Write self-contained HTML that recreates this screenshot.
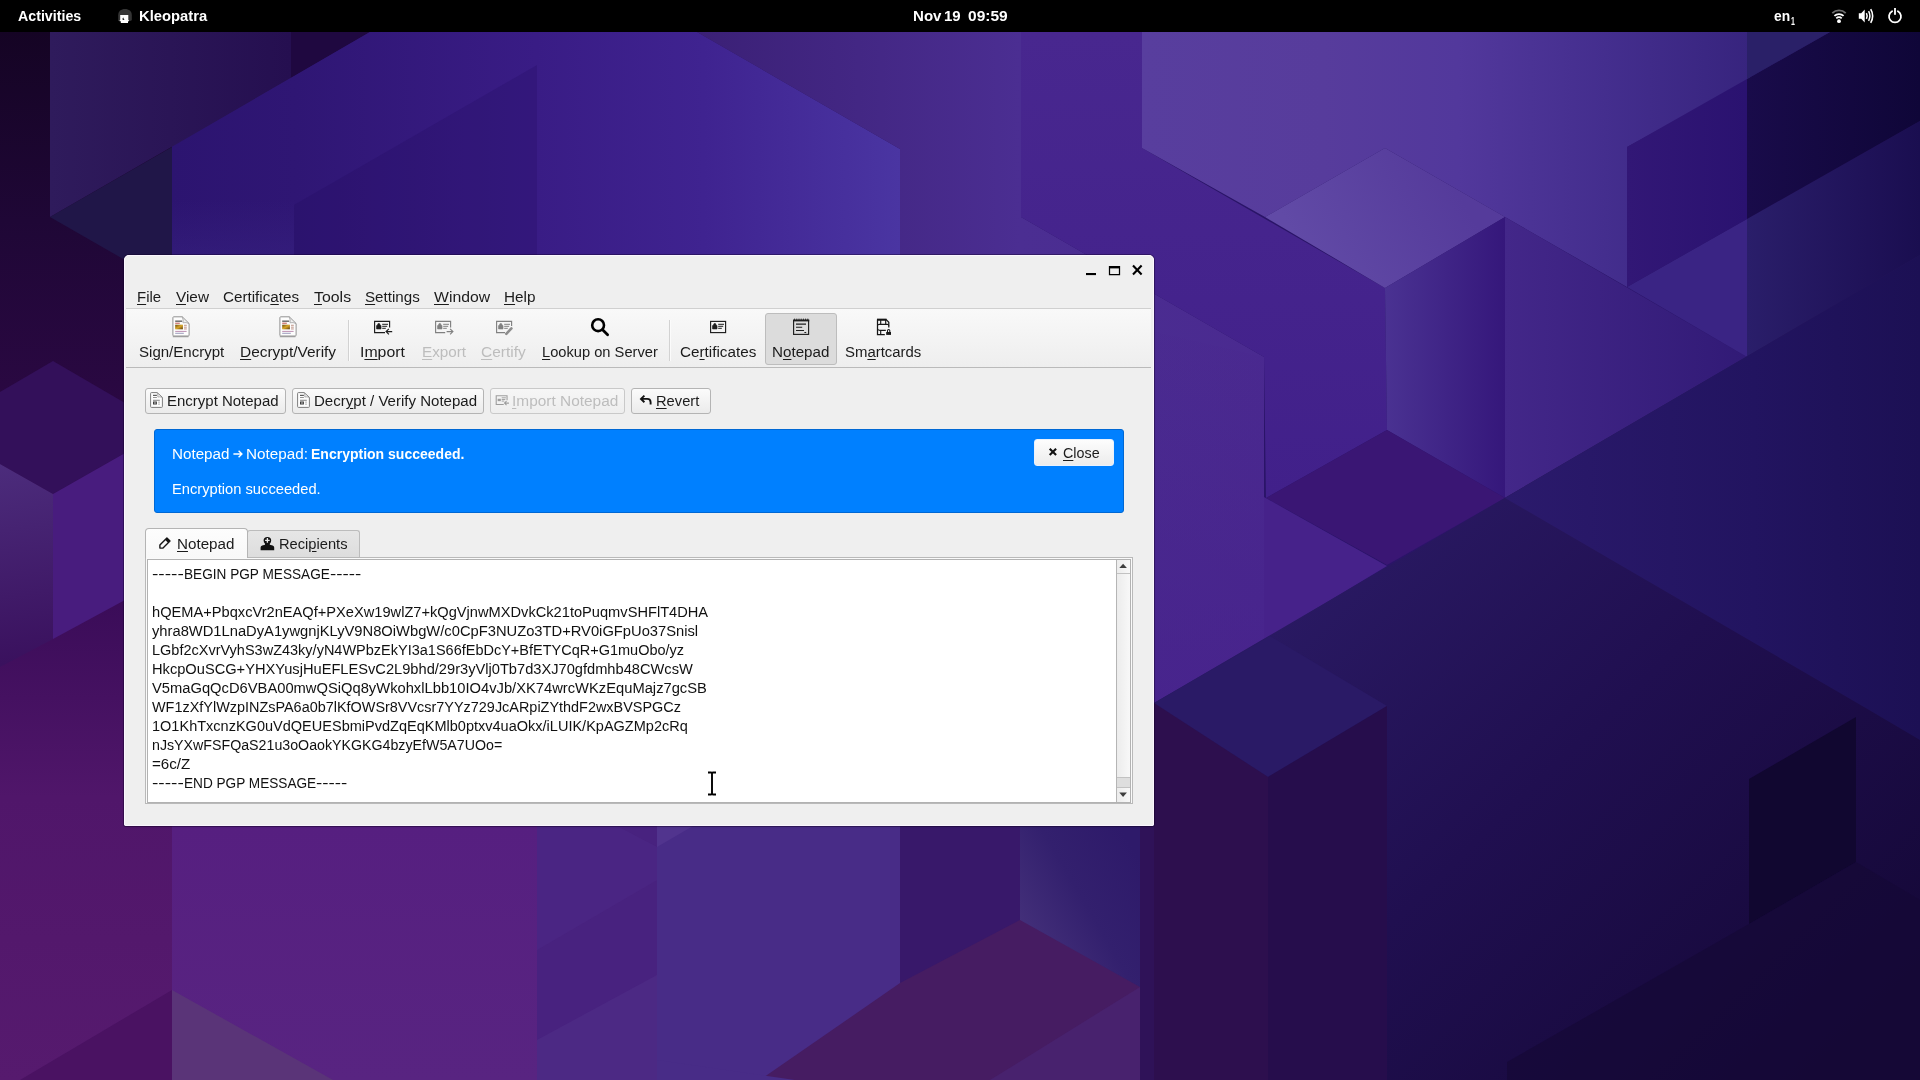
<!DOCTYPE html>
<html lang="en"><head><meta charset="utf-8"><title>Kleopatra</title>
<style>
html,body{margin:0;padding:0;}
html{overflow:hidden;background:#2a1666;}
body{width:1920px;height:1080px;overflow:hidden;position:relative;background:#2a1666;font-family:"Liberation Sans",sans-serif;font-size:14.67px;color:#1b1b1b;}
#wall{position:absolute;left:0;top:0;width:1920px;height:1080px;display:block;}
#topbar{position:absolute;left:0;top:0;width:1920px;height:32px;background:#000;}
.abs{position:absolute;}
#txt{position:absolute;left:0;top:0;width:1920px;height:1080px;will-change:transform;}
.t{position:absolute;white-space:pre;line-height:24px;height:24px;font-size:14.67px;transform-origin:0 50%;color:#1b1b1b;}
.t u{text-decoration:underline;text-decoration-thickness:1px;text-underline-offset:2px;}
.t.tb{color:#fff;font-weight:bold;}
.t.sub{font-size:10.5px;}
.t.dis{color:#bdbdbd;}
.t.wh{color:#fff;}
.t.b{font-weight:bold;}
.t.np{color:#111;}
#win{position:absolute;left:124px;top:255px;width:1030px;height:571px;background:#efefef;border-radius:5px 5px 2px 2px;box-shadow:0 0 0 1px rgba(16,0,36,.38),0 1px 2px rgba(0,0,0,.15);}
#win .hl{position:absolute;left:0;top:0;right:0;bottom:0;border:1px solid #fbf6ff;border-radius:5px 5px 2px 2px;pointer-events:none;}
#toolbar{position:absolute;left:126px;top:309px;width:1025px;height:58px;background:linear-gradient(#f9f9f9,#eeeeee);}
.hline{position:absolute;height:1px;}
.btn{position:absolute;box-sizing:border-box;border:1px solid #b4b4b4;border-radius:3px;background:linear-gradient(#fbfbfb,#ebebeb);}
.btn.dis{border-color:#c9c9c9;background:linear-gradient(#f6f6f6,#eeeeee);}

</style></head>
<body>
<svg id="wall" width="1920" height="1080" viewBox="0 0 1920 1080">
<defs>
<linearGradient id="gLeft" gradientUnits="userSpaceOnUse" x1="0" y1="32" x2="0" y2="1080">
 <stop offset="0" stop-color="#150424"/><stop offset=".18" stop-color="#1f0736"/><stop offset=".35" stop-color="#2a0842"/>
 <stop offset=".54" stop-color="#3a0c58"/><stop offset=".73" stop-color="#50166a"/><stop offset="1" stop-color="#561a6e"/></linearGradient>
<linearGradient id="gA" gradientUnits="userSpaceOnUse" x1="50" y1="0" x2="291" y2="0">
 <stop offset="0" stop-color="#2f1b5c"/><stop offset="1" stop-color="#250f50"/></linearGradient>
<linearGradient id="gB" gradientUnits="userSpaceOnUse" x1="172" y1="0" x2="900" y2="0">
 <stop offset="0" stop-color="#2c1470"/><stop offset=".17" stop-color="#2f1674"/><stop offset=".5" stop-color="#391c85"/>
 <stop offset=".73" stop-color="#3f2390"/><stop offset="1" stop-color="#4a35a2"/></linearGradient>
<linearGradient id="gE" gradientUnits="userSpaceOnUse" x1="697" y1="0" x2="1264" y2="0">
 <stop offset="0" stop-color="#3b2076"/><stop offset=".57" stop-color="#4b2e92"/><stop offset="1" stop-color="#4a2a90"/></linearGradient>
<linearGradient id="gEd" gradientUnits="userSpaceOnUse" x1="0" y1="300" x2="0" y2="720">
 <stop offset="0" stop-color="#46208a" stop-opacity="0"/><stop offset="1" stop-color="#46208a" stop-opacity=".7"/></linearGradient>
<linearGradient id="gF" gradientUnits="userSpaceOnUse" x1="0" y1="32" x2="0" y2="500">
 <stop offset="0" stop-color="#48278f"/><stop offset="1" stop-color="#41208a"/></linearGradient>
<linearGradient id="gG" gradientUnits="userSpaceOnUse" x1="1142" y1="0" x2="1750" y2="0">
 <stop offset="0" stop-color="#583e9e"/><stop offset=".3" stop-color="#573c9c"/><stop offset=".52" stop-color="#52389c"/>
 <stop offset=".76" stop-color="#442e8e"/><stop offset="1" stop-color="#37247e"/></linearGradient>
<linearGradient id="gH" gradientUnits="userSpaceOnUse" x1="1310" y1="262" x2="1450" y2="180">
 <stop offset="0" stop-color="#614aa6"/><stop offset="1" stop-color="#553b9b"/></linearGradient>
<linearGradient id="gI" gradientUnits="userSpaceOnUse" x1="1385" y1="0" x2="1505" y2="0">
 <stop offset="0" stop-color="#4a3292"/><stop offset="1" stop-color="#35177b"/></linearGradient>
<linearGradient id="gJ1" gradientUnits="userSpaceOnUse" x1="1505" y1="0" x2="1747" y2="0">
 <stop offset="0" stop-color="#432789"/><stop offset="1" stop-color="#311a76"/></linearGradient>
<linearGradient id="gJ3" gradientUnits="userSpaceOnUse" x1="1747" y1="0" x2="1920" y2="0">
 <stop offset="0" stop-color="#2a1e6a"/><stop offset=".7" stop-color="#1f1258"/><stop offset="1" stop-color="#1a0e50"/></linearGradient>
<linearGradient id="gK" gradientUnits="userSpaceOnUse" x1="1627" y1="0" x2="1747" y2="0">
 <stop offset="0" stop-color="#321776"/><stop offset="1" stop-color="#2a1270"/></linearGradient>
<linearGradient id="gK2" gradientUnits="userSpaceOnUse" x1="1747" y1="0" x2="1920" y2="0">
 <stop offset="0" stop-color="#190b4a"/><stop offset="1" stop-color="#0f0638"/></linearGradient>
<linearGradient id="gN" gradientUnits="userSpaceOnUse" x1="1300" y1="560" x2="1800" y2="1080">
 <stop offset="0" stop-color="#2a1a64"/><stop offset=".45" stop-color="#200f50"/><stop offset="1" stop-color="#150838"/></linearGradient>
<linearGradient id="gN1" gradientUnits="userSpaceOnUse" x1="1505" y1="0" x2="1920" y2="0">
 <stop offset="0" stop-color="#2b1a6c"/><stop offset=".6" stop-color="#221460"/><stop offset="1" stop-color="#1c1054"/></linearGradient>
<linearGradient id="gN4" gradientUnits="userSpaceOnUse" x1="1154" y1="0" x2="1387" y2="0">
 <stop offset="0" stop-color="#30114f"/><stop offset="1" stop-color="#230d4b"/></linearGradient>
<linearGradient id="gP1" gradientUnits="userSpaceOnUse" x1="0" y1="826" x2="0" y2="1080">
 <stop offset="0" stop-color="#561f80"/><stop offset="1" stop-color="#582481"/></linearGradient>
<linearGradient id="gP3" gradientUnits="userSpaceOnUse" x1="657" y1="0" x2="1020" y2="0">
 <stop offset="0" stop-color="#4b2d8d"/><stop offset=".6" stop-color="#482683"/><stop offset="1" stop-color="#421c74"/></linearGradient>
<linearGradient id="gP4" gradientUnits="userSpaceOnUse" x1="1020" y1="930" x2="1140" y2="860">
 <stop offset="0" stop-color="#44307a"/><stop offset=".5" stop-color="#33206e"/><stop offset="1" stop-color="#2e1a6a"/></linearGradient>
<linearGradient id="gCl" gradientUnits="userSpaceOnUse" x1="0" y1="464" x2="30" y2="660">
 <stop offset="0" stop-color="#4c2c7c"/><stop offset="1" stop-color="#3a115e"/></linearGradient>
<linearGradient id="gBl" gradientUnits="userSpaceOnUse" x1="0" y1="200" x2="0" y2="290">
 <stop offset="0" stop-color="#3c2888" stop-opacity="0"/><stop offset="1" stop-color="#3c2888" stop-opacity=".55"/></linearGradient>
</defs>
<rect width="1920" height="1080" fill="#2a1468"/>
<!-- left column -->
<rect x="0" y="0" width="172" height="1080" fill="url(#gLeft)"/>
<polygon points="50,32 291,32 291,78 50,217" fill="url(#gA)"/>
<polygon points="291,32 370,32 291,78" fill="#1f0840"/>
<polygon points="50,217 172,147 172,287" fill="#201648"/>
<!-- left cube -->
<polygon points="0,392 53,361 125,403 125,453 53,494 0,464" fill="#33105a"/>
<polygon points="0,464 53,494 53,639 0,667" fill="url(#gCl)"/>
<polygon points="53,494 125,453 125,600 53,639" fill="#481c7e"/>
<!-- B -->
<polygon points="172,147 370,32 697,32 900,149 900,830 172,830" fill="url(#gB)"/>
<polygon points="294,205 537,65 537,830 294,830" fill="#1e0a5c" opacity=".22"/>
<polygon points="172,200 294,200 294,300 172,300" fill="url(#gBl)"/>
<!-- E -->
<polygon points="697,32 1021,32 1021,217 1264,357 1264,640 1154,703 1154,830 900,830 900,149" fill="url(#gE)"/>
<polygon points="900,300 1021,300 1264,357 1264,640 1154,703 1154,830 900,830" fill="url(#gEd)"/>
<!-- band F -->
<polygon points="1021,32 1142,32 1142,148 1385,288 1387,430 1266,498 1264,357 1021,217" fill="url(#gF)"/>
<!-- G light -->
<polygon points="1142,32 1750,32 1750,80 1627,147 1627,287 1505,217 1385,148 1265,217 1142,148" fill="url(#gG)"/>
<polygon points="1265,217 1385,148 1505,217 1385,288" fill="url(#gH)"/>
<polygon points="1385,288 1505,217 1505,498 1387,430" fill="url(#gI)"/>
<!-- J -->
<polygon points="1505,217 1747,357 1505,498" fill="url(#gJ1)"/>
<polygon points="1627,287 1747,219 1747,357" fill="#3a2484"/>
<polygon points="1747,219 1920,121 1920,256 1747,357" fill="url(#gJ3)"/>
<!-- K band -->
<polygon points="1627,147 1747,79 1747,219 1627,287" fill="url(#gK)"/>
<polygon points="1747,79 1830,32 1920,32 1920,121 1747,219" fill="url(#gK2)"/>
<polygon points="1747,32 1830,32 1747,79" fill="#2a2068"/>
<!-- small dark diamond -->
<polygon points="1266,498 1387,430 1505,498 1387,565" fill="#3a1674"/>
<polygon points="1264,497 1387,566 1264,640" fill="#46228a"/>
<!-- N big dark -->
<polygon points="1154,703 1920,255 1920,1080 1154,1080" fill="url(#gN)"/>
<polygon points="1505,498 1920,255 1920,740 1864,707" fill="url(#gN1)"/>
<polygon points="1154,703 1270,636 1387,706 1268,777" fill="#2a1a66"/>
<polygon points="1154,703 1268,777 1268,1080 1154,1080" fill="#2d0f4e"/>
<polygon points="1268,777 1387,706 1387,1080 1268,1080" fill="#260d4c"/>
<polygon points="1749,779 1856,717 1856,862 1749,924" fill="#110730"/>
<polygon points="1507,1062 1749,924 1856,862 1920,900 1920,1080 1507,1080" fill="#150836" opacity=".7"/>
<!-- bottom under window -->
<rect x="172" y="826" width="365" height="254" fill="url(#gP1)"/>
<rect x="537" y="826" width="120" height="254" fill="#48227f"/>
<polygon points="537,826 617,826 657,847 657,880 537,950" fill="#4c2885" opacity=".6"/>
<polygon points="537,1040 657,975 657,1080 537,1080" fill="#4f2c86" opacity=".7"/>
<rect x="657" y="826" width="243" height="254" fill="#482c87"/>
<polygon points="657,847 693,826 657,826" fill="#51348e"/>
<rect x="900" y="826" width="120" height="254" fill="#38186a"/>
<rect x="1020" y="826" width="120" height="254" fill="url(#gP4)"/>
<polygon points="760,1080 900,983 1020,920 1140,987 1140,1080" fill="#461c62"/>
<polygon points="1140,987 1140,1080 990,1080" fill="#48226e"/>
<polygon points="657,1080 657,1060 795,1080" fill="#482c87"/>
<rect x="1140" y="826" width="14" height="254" fill="#2f1258"/>
<polygon points="172,990 20,1080 172,1080" fill="#4a1262"/>
<polygon points="172,990 333,1080 172,1080" fill="#5a3478"/>
</svg>
<div id="topbar"></div>
<!-- top bar icons -->
<svg class="abs" style="left:117px;top:8px" width="16" height="16" viewBox="0 0 16 16">
 <path d="M1.2 13 V7.2 C1.2 3.2 4 1 8 1 C12 1 14.8 3.2 14.8 7.2 V11.6 C14.8 12.6 14 13 13 13 Z" fill="#353535"/>
 <path d="M3.2 7 H11.3 V12.2 H12 V13.3 H11 V15 H3.8 V13.3 H2.6 V12.2 H3.2 Z" fill="#fff"/>
 <path d="M6.7 8.1 v1.4 c-1 .2 -1.5 1.2 -.9 2.4 h1.9 c-.9 -.3 -1.3 -1 -1 -1.6z" fill="#111"/>
</svg>
<svg class="abs" style="left:1831px;top:8px" width="16" height="16" viewBox="0 0 16 16">
 <path d="M1.3 5.1 A9.6 9.6 0 0 1 14.7 5.1" fill="none" stroke="#6f6f6f" stroke-width="1.9"/>
 <path d="M3.4 7.9 A6.6 6.6 0 0 1 12.6 7.9" fill="none" stroke="#fff" stroke-width="1.8"/>
 <path d="M5.3 10.3 A3.9 3.9 0 0 1 10.7 10.3" fill="none" stroke="#fff" stroke-width="1.7"/>
 <circle cx="8" cy="13.2" r="1.9" fill="#fff"/>
</svg>
<svg class="abs" style="left:1858px;top:8px" width="17" height="16" viewBox="0 0 17 16">
 <path d="M.8 5.2 H3.2 L6.7 1.6 V14.4 L3.2 10.8 H.8 Z" fill="#fff"/>
 <path d="M8.4 5.2 Q9.9 8 8.4 10.8" fill="none" stroke="#fff" stroke-width="1.5"/>
 <path d="M10.6 3.2 Q13.2 8 10.6 12.8" fill="none" stroke="#fff" stroke-width="1.5"/>
 <path d="M12.7 1.2 Q16.6 8 12.7 14.8" fill="none" stroke="#fff" stroke-width="1.6"/>
</svg>
<svg class="abs" style="left:1887px;top:7px" width="16" height="17" viewBox="0 0 16 17">
 <path d="M5.1 4.2 A6 6 0 1 0 10.9 4.2" fill="none" stroke="#fff" stroke-width="1.8" stroke-linecap="round"/>
 <rect x="7.1" y="1" width="1.8" height="6.8" fill="#fff"/>
</svg>

<div id="win"><div class="hl"></div></div>
<!-- window buttons -->
<svg class="abs" style="left:1082px;top:262px" width="64" height="16" viewBox="0 0 64 16">
 <rect x="4" y="11" width="10" height="2.1" fill="#000"/>
 <path d="M27.5 4.5 h10 v8 h-10 z M27.5 5.5 h10" fill="none" stroke="#000" stroke-width="1.25"/>
 <rect x="27" y="4" width="11" height="2.2" fill="#000"/>
 <path d="M51 3.6 l8.6 8.8 M59.6 3.6 l-8.6 8.8" stroke="#000" stroke-width="2.1" fill="none"/>
</svg>
<div class="hline" style="left:126px;top:308px;width:1025px;background:#d0d0d0"></div>
<div id="toolbar"></div>
<div class="hline" style="left:126px;top:367px;width:1025px;background:#bababa"></div>
<div class="abs" style="left:348px;top:320px;width:1px;height:41px;background:#d2d2d2"></div>
<div class="abs" style="left:349px;top:320px;width:1px;height:41px;background:#fbfbfb"></div>
<div class="abs" style="left:669px;top:320px;width:1px;height:41px;background:#d2d2d2"></div>
<div class="abs" style="left:670px;top:320px;width:1px;height:41px;background:#fbfbfb"></div>
<div class="abs" style="left:765px;top:313px;width:72px;height:52px;box-sizing:border-box;border:1px solid #bdbdbd;border-radius:3px;background:#dcdcdc"></div>

<!-- toolbar icons -->
<svg class="abs" style="left:171px;top:315px" width="20" height="23" viewBox="0 0 20 23">
 <defs><linearGradient id="img" x1="0" y1="0" x2="1" y2="1"><stop offset="0" stop-color="#6a4a0e"/><stop offset=".5" stop-color="#d8a628"/><stop offset="1" stop-color="#5a3c0c"/></linearGradient></defs>
 <path d="M1.8 21.6 h15.6" stroke="#8d8d8d" stroke-width="1.4" opacity=".7"/>
 <path d="M2.7 1.8 H11.2 L18.1 8.6 V20.2 Q18.1 21 17.3 21 H2.7 Q1.9 21 1.9 20.2 V2.6 Q1.9 1.8 2.7 1.8 Z" fill="#fdfdfd" stroke="#929292" stroke-width="1"/>
 <path d="M11.2 1.8 Q12.8 5.4 12 7.8 Q15 7 18.1 8.6 Z" fill="#efefef" stroke="#a2a2a2" stroke-width=".8"/>
 <rect x="4.2" y="5.6" width="7" height="1.1" fill="#3a3a3a"/>
 <rect x="4.2" y="7.7" width="4.6" height="1" fill="#c0504a"/>
 <rect x="4.2" y="9.7" width="7.7" height="4.6" fill="url(#img)"/>
 <rect x="13" y="9.8" width="2.8" height=".9" fill="#b98b7d"/><rect x="13" y="11.7" width="2.8" height=".9" fill="#b98b7d"/><rect x="13" y="13.5" width="2.8" height=".9" fill="#b98b7d"/>
 <rect x="4.2" y="15.9" width="11.4" height=".9" fill="#b583a8"/>
 <rect x="4.2" y="17.8" width="8.6" height=".9" fill="#8f8fb4"/>
</svg>
<svg class="abs" style="left:278px;top:315px" width="20" height="23" viewBox="0 0 20 23">
 <path d="M1.8 21.6 h15.6" stroke="#8d8d8d" stroke-width="1.4" opacity=".7"/>
 <path d="M2.7 1.8 H11.2 L18.1 8.6 V20.2 Q18.1 21 17.3 21 H2.7 Q1.9 21 1.9 20.2 V2.6 Q1.9 1.8 2.7 1.8 Z" fill="#fdfdfd" stroke="#929292" stroke-width="1"/>
 <path d="M11.2 1.8 Q12.8 5.4 12 7.8 Q15 7 18.1 8.6 Z" fill="#efefef" stroke="#a2a2a2" stroke-width=".8"/>
 <rect x="4.2" y="5.6" width="7" height="1.1" fill="#3a3a3a"/>
 <rect x="4.2" y="7.7" width="4.6" height="1" fill="#c0504a"/>
 <rect x="4.2" y="9.7" width="7.7" height="4.6" fill="url(#img)"/>
 <rect x="13" y="9.8" width="2.8" height=".9" fill="#b98b7d"/><rect x="13" y="11.7" width="2.8" height=".9" fill="#b98b7d"/><rect x="13" y="13.5" width="2.8" height=".9" fill="#b98b7d"/>
 <rect x="4.2" y="15.9" width="11.4" height=".9" fill="#b583a8"/>
 <rect x="4.2" y="17.8" width="8.6" height=".9" fill="#8f8fb4"/>
</svg>
<!-- import -->
<svg class="abs" style="left:373px;top:319px" width="22" height="18" viewBox="0 0 22 18">
 <path d="M12 13.6 H1.6 V2.4 H16.6 V8.6" fill="none" stroke="#1d1d1d" stroke-width="1.15"/>
 <path d="M3.6 6.6 h4.4 v3.3 h-4.4 z M4.6 6.6 v-.9 a1.2 1.2 0 0 1 2.4 0 v.9" fill="#1d1d1d" stroke="#1d1d1d" stroke-width=".7"/>
 <path d="M9.2 5.3 h5.8 M9.2 7.3 h5 M9.2 9.3 h3.6" stroke="#1d1d1d" stroke-width="1"/>
 <path d="M19.2 12.6 H13.4 M15.9 9.9 L13.1 12.6 L15.9 15.4" fill="none" stroke="#1d1d1d" stroke-width="1.15"/>
</svg>
<!-- export (disabled) -->
<svg class="abs" style="left:434px;top:319px" width="22" height="18" viewBox="0 0 22 18" opacity=".68">
 <path d="M11.2 13.6 H1.6 V2.4 H16.6 V8.6" fill="none" stroke="#4a4a4a" stroke-width="1.15"/>
 <path d="M3.6 6.6 h4.4 v3.3 h-4.4 z M4.6 6.6 v-.9 a1.2 1.2 0 0 1 2.4 0 v.9" fill="#4a4a4a" stroke="#4a4a4a" stroke-width=".7"/>
 <path d="M9.2 5.3 h5.8 M9.2 7.3 h5 M9.2 9.3 h3.6" stroke="#4a4a4a" stroke-width="1"/>
 <path d="M12.6 12.6 H18.6 M16.1 9.9 L18.9 12.6 L16.1 15.4" fill="none" stroke="#4a4a4a" stroke-width="1.15"/>
</svg>
<!-- certify (disabled) -->
<svg class="abs" style="left:495px;top:319px" width="22" height="18" viewBox="0 0 22 18" opacity=".68">
 <path d="M10 13.6 H1.6 V2.4 H16.6 V7" fill="none" stroke="#4a4a4a" stroke-width="1.15"/>
 <path d="M3.6 6.6 h4.4 v3.3 h-4.4 z M4.6 6.6 v-.9 a1.2 1.2 0 0 1 2.4 0 v.9" fill="#4a4a4a" stroke="#4a4a4a" stroke-width=".7"/>
 <path d="M9.2 5.3 h5.8 M9.2 7.3 h5 M9.2 9.3 h3.6" stroke="#4a4a4a" stroke-width="1"/>
 <path d="M11.3 14.8 L16.4 9.4" stroke="#5c5c5c" stroke-width="2.6" stroke-linecap="round"/>
</svg>
<!-- search -->
<svg class="abs" style="left:589px;top:316px" width="22" height="22" viewBox="0 0 22 22">
 <circle cx="9.1" cy="9.2" r="5.9" fill="none" stroke="#000" stroke-width="2.6"/>
 <path d="M13.6 13.8 L18.6 18.7" stroke="#000" stroke-width="2.8" stroke-linecap="round"/>
</svg>
<!-- certificates -->
<svg class="abs" style="left:709px;top:319px" width="20" height="16" viewBox="0 0 20 16">
 <rect x="1.6" y="2.4" width="15" height="11.2" fill="none" stroke="#1d1d1d" stroke-width="1.15"/>
 <path d="M3.6 6.6 h4.4 v3.3 h-4.4 z M4.6 6.6 v-.9 a1.2 1.2 0 0 1 2.4 0 v.9" fill="#1d1d1d" stroke="#1d1d1d" stroke-width=".7"/>
 <path d="M9.2 5.3 h5.8 M9.2 7.3 h5 M9.2 9.3 h3.6" stroke="#1d1d1d" stroke-width="1"/>
</svg>
<!-- notepad -->
<svg class="abs" style="left:792px;top:317px" width="18" height="19" viewBox="0 0 18 19">
 <rect x="1.6" y="3.4" width="15" height="14" fill="none" stroke="#1d1d1d" stroke-width="1.15"/>
 <rect x="1" y="2.6" width="16.2" height="1.8" fill="#1d1d1d"/>
 <path d="M2.6 1.6 v1.4 M4.8 1.6 v1.4 M7 1.6 v1.4 M9.2 1.6 v1.4 M11.4 1.6 v1.4 M13.6 1.6 v1.4 M15.8 1.6 v1.4" stroke="#1d1d1d" stroke-width=".9"/>
 <path d="M4 7.1 h10 M4 10.3 h6.2 M4 13.5 h8" stroke="#1d1d1d" stroke-width="1.1"/>
 <rect x="12.4" y="15" width="1.8" height="1" fill="#1d1d1d"/>
</svg>
<!-- smartcards -->
<svg class="abs" style="left:876px;top:317px" width="17" height="19" viewBox="0 0 17 19">
 <path d="M1.5 2.4 V17.6 H8.8 M1.5 2.8 H10.4 L12.8 5.2 V10.6" fill="none" stroke="#161616" stroke-width="1.25"/>
 <path d="M1 2.6 H10.6" stroke="#161616" stroke-width="1.9"/>
 <path d="M4.7 3 V7.3 M9.7 3 V7.3 M3.4 7.3 H11.3 M3.4 7.3 Q1.8 7.5 1.5 8.6 M11.3 7.3 Q12.5 7.6 12.8 8.6 M3.4 13.3 H9.8 M3.4 13.3 Q1.9 13 1.5 11.9 M4.7 13.3 V17.6" fill="none" stroke="#161616" stroke-width="1.15"/>
 <rect x="10.2" y="15" width="4.8" height="2.9" fill="#161616"/>
 <path d="M11.5 15.2 V13.6 a1.15 1.15 0 0 1 2.3 0 V15.2" fill="none" stroke="#161616" stroke-width="1.05"/>
</svg>

<!-- push buttons -->
<div class="btn" style="left:145px;top:388px;width:141px;height:26px"></div>
<div class="btn" style="left:292px;top:388px;width:192px;height:26px"></div>
<div class="btn dis" style="left:490px;top:388px;width:135px;height:26px"></div>
<div class="btn" style="left:631px;top:388px;width:80px;height:26px"></div>
<svg class="abs" style="left:149px;top:391px" width="15" height="18" viewBox="0 0 15 18">
 <path d="M2.4 1.6 H8.2 L13.4 6.4 V15.6 Q13.4 16.4 12.6 16.4 H2.4 Q1.6 16.4 1.6 15.6 V2.4 Q1.6 1.6 2.4 1.6 Z" fill="#fdfdfd" stroke="#7d7d7d" stroke-width="1"/>
 <path d="M8.2 1.8 Q9.4 4.2 8.8 6 Q11 5.4 13.2 6.4" fill="none" stroke="#8d8d8d" stroke-width=".7"/>
 <rect x="4" y="3.8" width="3.9" height="1.1" fill="#4a4a4a"/><rect x="4" y="6" width="3.9" height=".9" fill="#8a8a8a"/>
 <rect x="4" y="8.8" width="6.8" height=".9" fill="#777"/>
 <rect x="4" y="10.5" width="3.9" height="3" fill="#3c3c3c"/><rect x="5" y="11.5" width="1.9" height="1" fill="#cfcfcf"/>
 <rect x="9.2" y="10.7" width="1.6" height=".8" fill="#8a8a8a"/><rect x="9.2" y="12.7" width="1.6" height=".8" fill="#8a8a8a"/>
</svg>
<svg class="abs" style="left:296px;top:391px" width="15" height="18" viewBox="0 0 15 18">
 <path d="M2.4 1.6 H8.2 L13.4 6.4 V15.6 Q13.4 16.4 12.6 16.4 H2.4 Q1.6 16.4 1.6 15.6 V2.4 Q1.6 1.6 2.4 1.6 Z" fill="#fdfdfd" stroke="#7d7d7d" stroke-width="1"/>
 <path d="M8.2 1.8 Q9.4 4.2 8.8 6 Q11 5.4 13.2 6.4" fill="none" stroke="#8d8d8d" stroke-width=".7"/>
 <rect x="4" y="3.8" width="3.9" height="1.1" fill="#4a4a4a"/><rect x="4" y="6" width="3.9" height=".9" fill="#8a8a8a"/>
 <rect x="4" y="8.8" width="6.8" height=".9" fill="#777"/>
 <rect x="4" y="10.5" width="3.9" height="3" fill="#3c3c3c"/><rect x="5" y="11.5" width="1.9" height="1" fill="#cfcfcf"/>
 <rect x="9.2" y="10.7" width="1.6" height=".8" fill="#8a8a8a"/><rect x="9.2" y="12.7" width="1.6" height=".8" fill="#8a8a8a"/>
</svg>
<svg class="abs" style="left:495px;top:394px" width="16" height="13" viewBox="0 0 22 18" opacity=".5">
 <path d="M12 14.5 H1.6 V2.4 H16.6 V8.6" fill="none" stroke="#4a4a4a" stroke-width="1.5"/>
 <path d="M3.6 6.6 h4.4 v3.3 h-4.4 z" fill="#4a4a4a"/>
 <path d="M9.2 5.3 h5.8 M9.2 7.6 h5 M9.2 9.8 h3.6" stroke="#4a4a4a" stroke-width="1.3"/>
 <path d="M19.2 12.6 H13.4 M15.9 9.9 L13.1 12.6 L15.9 15.4" fill="none" stroke="#4a4a4a" stroke-width="1.5"/>
</svg>
<svg class="abs" style="left:639px;top:394px" width="14" height="13" viewBox="0 0 14 13">
 <path d="M5.4 1.6 L2 4.9 L5.4 8.2 M2.2 4.9 H8.2 Q11.6 4.9 11.6 8.2 V10.4" fill="none" stroke="#111" stroke-width="1.9"/>
</svg>

<!-- banner -->
<div class="abs" style="left:154px;top:429px;width:970px;height:84px;box-sizing:border-box;background:#0080ff;border:1px solid #0068d4;border-radius:3px"></div>
<svg class="abs" style="left:232px;top:449px" width="12" height="10" viewBox="0 0 12 10">
 <path d="M1.4 5 H9.6 M6.6 1.8 L9.9 5 L6.6 8.2" fill="none" stroke="#fff" stroke-width="1.4"/>
</svg>
<div class="abs" style="left:1034px;top:439px;width:80px;height:27px;box-sizing:border-box;border:1px solid #e9f1fd;border-radius:3px;background:linear-gradient(#fdfdfd,#ececec)"></div>
<svg class="abs" style="left:1048px;top:447px" width="10" height="10" viewBox="0 0 10 10">
 <path d="M1.7 1.7 L8.1 8.1 M8.1 1.7 L1.7 8.1" stroke="#111" stroke-width="2.1"/>
</svg>

<!-- tab widget -->
<div class="abs" style="left:145px;top:557px;width:988px;height:247px;box-sizing:border-box;border:1px solid #b9b9b9;background:#fafafa"></div>
<div class="abs" style="left:147px;top:559px;width:984px;height:244px;box-sizing:border-box;border:1px solid #b2b2b2;background:#fff"></div>
<div class="abs" style="left:247px;top:530px;width:113px;height:27px;box-sizing:border-box;border:1px solid #bcbcbc;border-bottom:none;border-radius:3px 3px 0 0;background:linear-gradient(#e6e6e6,#dddddd)"></div>
<div class="abs" style="left:145px;top:528px;width:103px;height:30px;box-sizing:border-box;border:1px solid #b4b4b4;border-bottom:none;border-radius:4px 4px 0 0;background:linear-gradient(#fdfdfd,#f8f8f8)"></div>
<svg class="abs" style="left:158px;top:536px" width="14" height="14" viewBox="0 0 14 14">
 <path d="M8.9 2 L12 5.1 L5 12.1 H1.9 V9 Z" fill="none" stroke="#161616" stroke-width="1.4" stroke-linejoin="round"/>
 <path d="M8.9 2 L12 5.1 L10.2 6.9 L7.1 3.8 Z" fill="#161616"/>
</svg>
<svg class="abs" style="left:260px;top:536px" width="15" height="15" viewBox="0 0 15 15">
 <path d="M.6 14.2 V11.4 Q.6 10 2.2 9.6 L5 8.8 V7.8 Q3.6 6.6 3.6 4.6 Q3.6 1 7.4 1 Q11.2 1 11.2 4.6 Q11.2 6.6 9.8 7.8 V8.8 L12.6 9.6 Q14.2 10 14.2 11.4 V14.2 Z" fill="#111"/>
 <path d="M7.4 2.1 V6.7 M5.1 4.4 H9.7" stroke="#ececec" stroke-width="1.35"/>
</svg>
<!-- scrollbar -->
<div class="abs" style="left:1116px;top:560px;width:13px;height:242px;background:linear-gradient(90deg,#ececec,#f8f8f8);border-left:1px solid #b5b5b5"></div>
<div class="hline" style="left:1117px;top:573px;width:13px;background:#c2c2c2"></div>
<div class="abs" style="left:1117px;top:777px;width:13px;height:11px;box-sizing:border-box;background:#dedede;border-top:1px solid #c2c2c2;border-bottom:1px solid #c2c2c2"></div>
<svg class="abs" style="left:1117px;top:560px" width="13" height="242" viewBox="0 0 13 242">
 <path d="M2.3 8.1 L6.1 3.8 L9.9 8.1 Z" fill="#3e3e3e"/>
 <path d="M2.3 232.6 L6.1 236.9 L9.9 232.6 Z" fill="#3e3e3e"/>
</svg>
<!-- I-beam cursor -->
<svg class="abs" style="left:705px;top:770px" width="14" height="27" viewBox="0 0 14 27">
 <path d="M3 2.5 H6 Q7 2.5 7 3.6 Q7 2.5 8 2.5 H11 M3 24.5 H6 Q7 24.5 7 23.4 Q7 24.5 8 24.5 H11 M7 3.4 V23.6" fill="none" stroke="#fff" stroke-width="3.8"/>
 <path d="M3 2.5 H6 Q7 2.5 7 3.6 Q7 2.5 8 2.5 H11 M3 24.5 H6 Q7 24.5 7 23.4 Q7 24.5 8 24.5 H11 M7 3.4 V23.6" fill="none" stroke="#000" stroke-width="1.9"/>
</svg>

<div id="txt">
<span class="t tb" id="t0" style="left:17.80px;top:3.71px;transform:scaleX(0.9697);">Activities</span>
<span class="t tb" id="t1" style="left:138.80px;top:3.71px;transform:scaleX(1.0087);">Kleopatra</span>
<span class="t tb" id="t2" style="left:912.80px;top:3.71px;transform:scaleX(1.0288);">Nov</span>
<span class="t tb" id="t3" style="left:943.80px;top:3.71px;transform:scaleX(1.0238);">19</span>
<span class="t tb" id="t4" style="left:967.80px;top:3.71px;transform:scaleX(1.0587);">09:59</span>
<span class="t tb" id="t5" style="left:1774.20px;top:3.71px;transform:scaleX(0.9410);">en</span>
<span class="t tb sub" id="t6" style="left:1791.20px;top:9.36px;transform:scaleX(0.6674);">1</span>
<span class="t " id="t7" style="left:137.20px;top:284.91px;transform:scaleX(1.0201);"><u>F</u>ile</span>
<span class="t " id="t8" style="left:175.50px;top:284.91px;transform:scaleX(1.0471);"><u>V</u>iew</span>
<span class="t " id="t9" style="left:223.20px;top:284.91px;transform:scaleX(1.0378);">Certific<u>a</u>tes</span>
<span class="t " id="t10" style="left:313.50px;top:284.91px;transform:scaleX(1.0842);"><u>T</u>ools</span>
<span class="t " id="t11" style="left:364.80px;top:284.91px;transform:scaleX(1.0346);"><u>S</u>ettings</span>
<span class="t " id="t12" style="left:433.50px;top:284.91px;transform:scaleX(1.0759);"><u>W</u>indow</span>
<span class="t " id="t13" style="left:504.00px;top:284.91px;transform:scaleX(1.0446);"><u>H</u>elp</span>
<span class="t " id="t14" style="left:138.50px;top:339.91px;transform:scaleX(1.0262);">Si<u>g</u>n/Encrypt</span>
<span class="t " id="t15" style="left:240.20px;top:339.91px;transform:scaleX(1.0533);"><u>D</u>ecrypt/Verify</span>
<span class="t " id="t16" style="left:360.20px;top:339.91px;transform:scaleX(1.0803);">I<u>m</u>port</span>
<span class="t dis" id="t17" style="left:421.50px;top:339.91px;transform:scaleX(1.0407);"><u>E</u>xport</span>
<span class="t dis" id="t18" style="left:481.30px;top:339.91px;transform:scaleX(1.0553);"><u>C</u>ertify</span>
<span class="t " id="t19" style="left:541.80px;top:339.91px;transform:scaleX(1.0008);"><u>L</u>ookup on Server</span>
<span class="t " id="t20" style="left:680.20px;top:339.91px;transform:scaleX(1.0405);">Ce<u>r</u>tificates</span>
<span class="t " id="t21" style="left:772.20px;top:339.91px;transform:scaleX(1.0354);">N<u>o</u>tepad</span>
<span class="t " id="t22" style="left:845.20px;top:339.91px;transform:scaleX(1.0182);">Sm<u>a</u>rtcards</span>
<span class="t " id="t23" style="left:167.00px;top:388.91px;transform:scaleX(1.0222);">Encrypt Notepad</span>
<span class="t " id="t24" style="left:314.20px;top:388.91px;transform:scaleX(1.0267);">Decr<u>y</u>pt / Verify Notepad</span>
<span class="t dis" id="t25" style="left:511.50px;top:388.91px;transform:scaleX(1.0521);"><u>I</u>mport Notepad</span>
<span class="t " id="t26" style="left:655.80px;top:388.91px;transform:scaleX(1.0026);"><u>R</u>evert</span>
<span class="t wh" id="t27" style="left:171.80px;top:441.71px;transform:scaleX(1.0375);">Notepad</span>
<span class="t wh" id="t28" style="left:246.20px;top:441.71px;transform:scaleX(1.0406);">Notepad:</span>
<span class="t wh b" id="t29" style="left:311.40px;top:441.71px;transform:scaleX(0.9560);">Encryption succeeded.</span>
<span class="t wh" id="t30" style="left:171.80px;top:476.51px;transform:scaleX(1.0028);">Encryption succeeded.</span>
<span class="t " id="t31" style="left:1063.10px;top:440.51px;transform:scaleX(0.9764);"><u>C</u>lose</span>
<span class="t " id="t32" style="left:177.10px;top:531.71px;transform:scaleX(1.0357);"><u>N</u>otepad</span>
<span class="t " id="t33" style="left:279.30px;top:532.31px;transform:scaleX(1.0007);">Reci<u>p</u>ients</span>
<span class="t np" id="t34" style="left:152.40px;top:561.91px;transform:scaleX(1.3029);">-----</span>
<span class="t np" id="t35" style="left:184.10px;top:561.91px;transform:scaleX(0.9297);">BEGIN PGP MESSAGE</span>
<span class="t np" id="t36" style="left:329.80px;top:561.91px;transform:scaleX(1.2784);">-----</span>
<span class="t np" id="t37" style="left:152.00px;top:599.91px;transform:scaleX(0.9984);">hQEMA+PbqxcVr2nEAQf+PXeXw19wlZ7+kQgVjnwMXDvkCk21toPuqmvSHFlT4DHA</span>
<span class="t np" id="t38" style="left:152.00px;top:618.91px;transform:scaleX(1.0044);">yhra8WD1LnaDyA1ywgnjKLyV9N8OiWbgW/c0CpF3NUZo3TD+RV0iGFpUo37Snisl</span>
<span class="t np" id="t39" style="left:152.00px;top:637.91px;transform:scaleX(0.9892);">LGbf2cXvrVyhS3wZ43ky/yN4WPbzEkYI3a1S66fEbDcY+BfETYCqR+G1muObo/yz</span>
<span class="t np" id="t40" style="left:152.00px;top:656.91px;transform:scaleX(0.9990);">HkcpOuSCG+YHXYusjHuEFLESvC2L9bhd/29r3yVlj0Tb7d3XJ70gfdmhb48CWcsW</span>
<span class="t np" id="t41" style="left:152.00px;top:675.91px;transform:scaleX(1.0047);">V5maGqQcD6VBA00mwQSiQq8yWkohxlLbb10IO4vJb/XK74wrcWKzEquMajz7gcSB</span>
<span class="t np" id="t42" style="left:152.00px;top:694.91px;transform:scaleX(0.9844);">WF1zXfYlWzpINZsPA6a0b7lKfOWSr8VVcsr7YYz729JcARpiZYthdF2wxBVSPGCz</span>
<span class="t np" id="t43" style="left:152.00px;top:713.91px;transform:scaleX(0.9906);">1O1KhTxcnzKG0uVdQEUESbmiPvdZqEqKMlb0ptxv4uaOkx/iLUIK/KpAGZMp2cRq</span>
<span class="t np" id="t44" style="left:152.00px;top:732.91px;transform:scaleX(0.9693);">nJsYXwFSFQaS21u3oOaokYKGKG4bzyEfW5A7UOo=</span>
<span class="t np" id="t45" style="left:152.00px;top:751.91px;transform:scaleX(1.0330);">=6c/Z</span>
<span class="t np" id="t46" style="left:152.40px;top:770.91px;transform:scaleX(1.3029);">-----</span>
<span class="t np" id="t47" style="left:184.10px;top:770.91px;transform:scaleX(0.9292);">END PGP MESSAGE</span>
<span class="t np" id="t48" style="left:316.10px;top:770.91px;transform:scaleX(1.2784);">-----</span>
</div>
</body></html>
